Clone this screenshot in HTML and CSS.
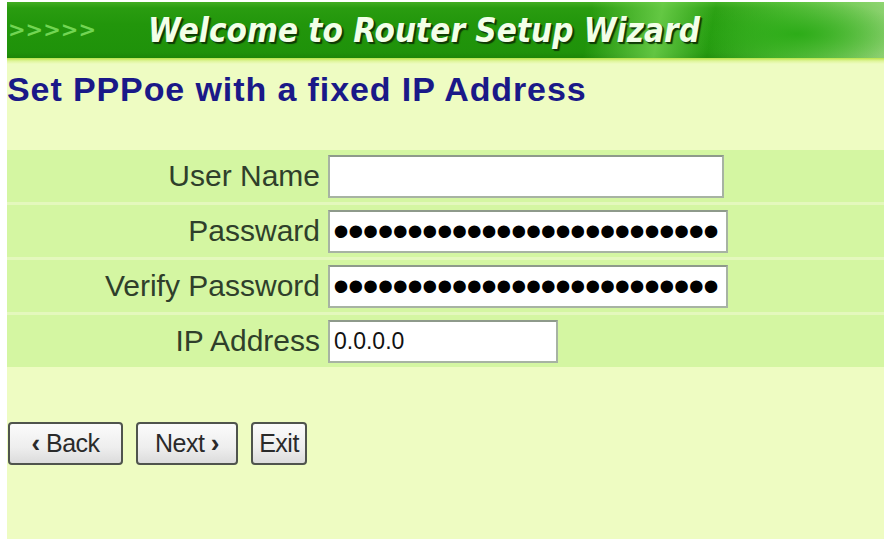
FILE: index.html
```html
<!DOCTYPE html>
<html>
<head>
<meta charset="utf-8">
<title>Router Setup Wizard</title>
<link rel="stylesheet" href="styles.css">
</head>
<body>
<div class="page">
  <div class="banner">
    <span class="chevrons">&gt;&gt;&gt;&gt;&gt;</span>
    <span class="banner-title">Welcome to Router Setup Wizard</span>
  </div>
  <div class="banner-edge"></div>
  <h1 class="heading">Set PPPoe with a fixed IP Address</h1>
  <div class="form">
    <div class="row">
      <label class="label" for="user">User Name</label>
      <input class="field field-wide" id="user" type="text" value="">
    </div>
    <div class="row">
      <label class="label" for="pass">Passward</label>
      <input class="field field-full pw" id="pass" type="password" value="abcdefghijklmnopqrstuvwxyz">
    </div>
    <div class="row">
      <label class="label" for="vpass">Verify Password</label>
      <input class="field field-full pw" id="vpass" type="password" value="abcdefghijklmnopqrstuvwxyz">
    </div>
    <div class="row">
      <label class="label" for="ip">IP Address</label>
      <input class="field field-ip" id="ip" type="text" value="0.0.0.0">
    </div>
  </div>
  <div class="actions">
    <button class="btn btn-back" type="button"><span class="arrow">&lsaquo;</span> Back</button>
    <button class="btn btn-next" type="button">Next <span class="arrow">&rsaquo;</span></button>
    <button class="btn btn-exit" type="button">Exit</button>
  </div>
</div>
</body>
</html>
```
FILE: styles.css
```css
html, body {
  margin: 0;
  padding: 0;
  background: #ffffff;
}

.page {
  margin: 2px 3px 0 7px;
  height: 537px;
  background: #eefcc2;
  font-family: "Liberation Sans", Arial, sans-serif;
  overflow: hidden;
}

.banner {
  height: 56px;
  display: flex;
  align-items: center;
  background:
    radial-gradient(ellipse 110px 34px at 790px 32px, rgba(40,170,20,0.9), rgba(40,170,20,0) 100%),
    linear-gradient(100deg, rgba(0,0,0,0) 66%, rgba(120,215,85,0.75) 74%, rgba(60,185,40,0.2) 80%, rgba(110,210,80,0.6) 88%, rgba(150,220,120,0.75) 96%, rgba(170,225,140,0.8) 100%),
    linear-gradient(#43ad22 0px, #2a9c10 6px, #22960b 40%, #1f920a 90%, #1c8608 100%);
}

.chevrons {
  width: 140px;
  padding-left: 1px;
  font-family: "DejaVu Sans", sans-serif;
  font-weight: bold;
  font-size: 21px;
  letter-spacing: 0px;
  color: #72d553;
}

.banner-title {
  font-family: "DejaVu Sans Condensed", "DejaVu Sans", sans-serif;
  font-weight: bold;
  font-style: italic;
  font-size: 33px;
  color: #f2ffe8;
  text-shadow: 2px 2px 1px #0f3a05, 1px 1px 0 #1a4a0a;
  white-space: nowrap;
}

.banner-edge {
  height: 6px;
  background: linear-gradient(#b8e448, #dff59a 50%, #eefcc2);
}

.heading {
  margin: 5px 0 0 0;
  height: 40px;
  line-height: 40px;
  font-family: "Liberation Sans", Arial, sans-serif;
  font-weight: bold;
  font-size: 34px;
  letter-spacing: 0.9px;
  color: #1a1988;
}

.form {
  margin-top: 41px;
  display: grid;
  row-gap: 3px;
  background: #e4f8bd;
}

.row {
  height: 52px;
  display: grid;
  grid-template-columns: 321px 1fr;
  align-items: center;
  background: #d4f6a2;
}

.label {
  text-align: right;
  padding-right: 8px;
  font-size: 30px;
  color: #2f3f2b;
  white-space: nowrap;
}

.field {
  box-sizing: border-box;
  height: 43px;
  margin: 0;
  padding: 0 4px;
  border: 2px solid #a7b3a3;
  border-top-color: #8e9a8b;
  background: #ffffff;
  font-family: "Liberation Sans", Arial, sans-serif;
  font-size: 23px;
  color: #111111;
  outline: none;
}

.field-wide { width: 396px; }
.field-full { width: 400px; }
.field-ip { width: 230px; }

.pw {
  font-size: 46px;
  letter-spacing: -1.3px;
  padding-left: 3px;
  color: #000000;
}

.actions {
  margin-top: 55px;
  display: flex;
  gap: 13px;
  padding-left: 1px;
}

.btn {
  box-sizing: border-box;
  height: 43px;
  padding: 0;
  border: 2px solid #4f544d;
  border-radius: 4px;
  background: linear-gradient(#fbfbfb, #eeeeee 60%, #dcdcdc);
  font-family: "Liberation Sans", Arial, sans-serif;
  font-size: 25px;
  color: #2a2a2a;
  letter-spacing: -0.5px;
}

.btn-back { width: 115px; }
.btn-next { width: 102px; }
.btn-exit { width: 56px; }

.arrow {
  font-weight: bold;
  font-size: 26px;
}
```
